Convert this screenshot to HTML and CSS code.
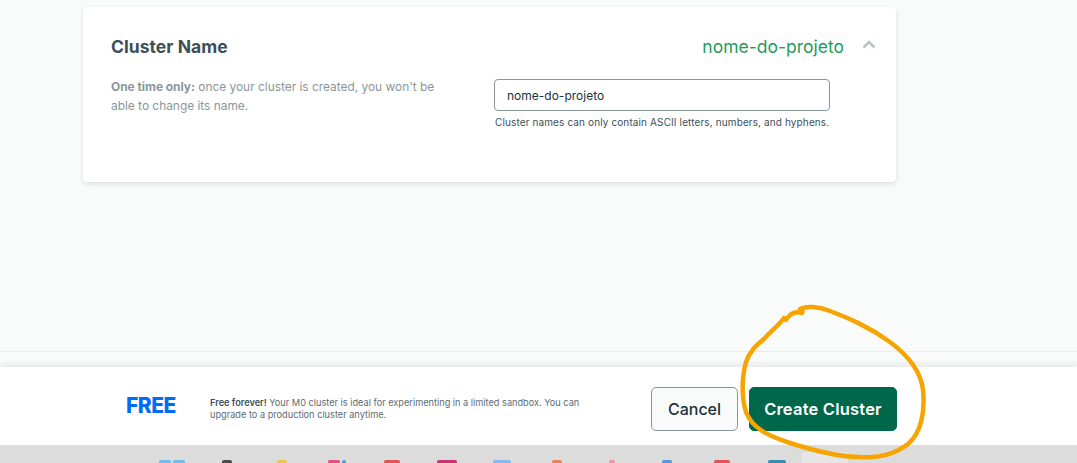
FILE: index.html
```html
<!DOCTYPE html>
<html lang="en">
<head>
<meta charset="utf-8">
<title>Create Cluster</title>
<link rel="stylesheet" href="styles.css">
</head>
<body>
<div class="page">
  <main class="main">
    <section class="card">
      <div class="card-head">
        <h2 class="card-title">Cluster Name</h2>
        <div class="card-summary">
          <span class="summary-name">nome-do-projeto</span>
          <svg class="chevron" width="14" height="9" viewBox="0 0 14 9"><path d="M1.5 7.5 L7 2 L12.5 7.5" fill="none" stroke="#b8c4c2" stroke-width="2.6" stroke-linejoin="miter"/></svg>
        </div>
      </div>
      <div class="card-body">
        <p class="desc"><strong>One time only:</strong> once your cluster is created, you won't be able to change its name.</p>
        <div class="field">
          <div class="input">nome-do-projeto</div>
          <p class="helper">Cluster names can only contain ASCII letters, numbers, and hyphens.</p>
        </div>
      </div>
    </section>
  </main>
  <footer class="footer">
    <div class="price">FREE</div>
    <p class="note"><strong>Free forever!</strong> Your M0 cluster is ideal for experimenting in a limited sandbox. You can upgrade to a production cluster anytime.</p>
    <div class="actions">
      <button class="btn btn-cancel">Cancel</button>
      <button class="btn btn-create">Create Cluster</button>
    </div>
  </footer>
  <div class="taskbar">
    <span class="tb"><i class="ic ic-blue w12"></i><i class="ic ic-blue w12"></i></span>
    <span class="tb"><i class="ic ic-dark w10"></i></span>
    <span class="tb"><i class="ic ic-yellow w10"></i></span>
    <span class="tb"><i class="ic ic-pink w12"></i><i class="ic ic-blue2 w4"></i></span>
    <span class="tb"><i class="ic ic-red w16"></i></span>
    <span class="tb"><i class="ic ic-mag w20"></i></span>
    <span class="tb"><i class="ic ic-lblue w18"></i></span>
    <span class="tb"><i class="ic ic-orange w10"></i></span>
    <span class="tb"><i class="ic ic-lpink w6"></i></span>
    <span class="tb"><i class="ic ic-blue2 w10"></i></span>
    <span class="tb"><i class="ic ic-red w16"></i></span>
    <span class="tb"><i class="ic ic-teal w18"></i></span>
    <span class="tb tb-active"></span>
  </div>
  <svg class="scribble" width="1077" height="463" viewBox="0 0 1077 463">
    <path d="M786 320 C790 313 796 311 802 313 C803 311 802 309 800 309 C806 306 818 306 830 311 C848 318 868 326 890 342 C910 357 921 372 923 390 C925 410 922 432 908 444 C894 455 876 458 860 457 C838 457 812 450 790 443 C768 436 752 428 746 412 C741 396 742 376 746 362 C750 350 758 344 765 338 C772 330 778 326 784 318"
      fill="none" stroke="#f8a400" stroke-width="4.5" stroke-linecap="round" stroke-linejoin="round"/>
  </svg>
</div>
</body>
</html>
```

FILE: styles.css
```css
* { box-sizing: border-box; }

html, body {
  margin: 0;
  padding: 0;
}

body {
  width: 1077px;
  height: 463px;
  overflow: hidden;
  background: #f9fbfa;
  font-family: Inter, "Open Sans", sans-serif;
  color: #3d4f58;
}

.page {
  position: relative;
  display: flex;
  flex-direction: column;
  height: 463px;
}

.main {
  height: 352px;
  padding: 7px 0 0 83px;
  border-bottom: 1px solid #e7eeec;
}

.card {
  width: 813px;
  height: 175px;
  background: #fff;
  border-radius: 4px;
  box-shadow: 0 2px 5px rgba(6, 22, 33, 0.12), 0 0 1px rgba(6, 22, 33, 0.1);
  padding: 27px 20px 0 28px;
}

.card-head {
  display: flex;
  justify-content: space-between;
  align-items: center;
  height: 24px;
}

.card-title {
  margin: 0;
  font-size: 17.5px;
  font-weight: 700;
  color: #3d4f58;
  letter-spacing: 0.05px;
}

.card-summary {
  display: flex;
  align-items: center;
  gap: 18px;
}

.summary-name {
  font-size: 17.5px;
  color: #1e9c5a;
  font-weight: 400;
}

.chevron { display: block; margin-top: -3px; }

.card-body {
  display: flex;
  margin-top: 21px;
}

.desc {
  width: 383px;
  margin: -2px 0 0;
  padding-right: 40px;
  font-size: 11.9px;
  line-height: 19px;
  color: #89979b;
}

.desc strong { font-weight: 700; color: #89979b; }

.field { width: 336px; }

.input {
  height: 32px;
  border: 1px solid #89979b;
  border-radius: 4px;
  padding: 0 12px;
  display: flex;
  align-items: center;
  font-size: 12px;
  color: #21313c;
}

.helper {
  margin: 5px 0 0 1px;
  font-size: 10px;
  letter-spacing: 0.12px;
  color: #3d4f58;
  white-space: nowrap;
}

.footer {
  margin-top: 15px;
  height: 78px;
  background: #fff;
  box-shadow: 0 -3px 6px rgba(6, 22, 33, 0.08);
  display: flex;
  align-items: center;
  padding: 6px 180px 0 126px;
}

.price {
  width: 84px;
  font-size: 21px;
  font-weight: 800;
  color: #016bf8;
  letter-spacing: -0.5px;
  margin-top: -8px;
}

.note {
  width: 385px;
  margin: 0;
  font-size: 9.2px;
  line-height: 12px;
  color: #5d6c74;
}

.note strong { font-weight: 600; color: #3d4f58; }

.actions {
  margin-left: auto;
  display: flex;
  gap: 11px;
}

.btn {
  height: 44px;
  border-radius: 5px;
  font-family: inherit;
  padding: 0;
  cursor: pointer;
}

.btn-cancel {
  width: 87px;
  background: #f9fbfa;
  border: 1px solid #89979b;
  color: #21313c;
  font-size: 16px;
  font-weight: 500;
}

.btn-create {
  width: 148px;
  background: #00684a;
  border: 1px solid #00684a;
  color: #fff;
  font-size: 16.5px;
  letter-spacing: 0.2px;
  font-weight: 600;
}

.taskbar {
  flex: 1;
  background: #dcdcdc;
  display: flex;
  align-items: flex-end;
  padding-left: 144px;
}

.tb {
  width: 55px;
  height: 4px;
  display: flex;
  justify-content: center;
  align-items: flex-end;
  gap: 2px;
}

.tb-active {
  width: 46px;
  height: 11px;
  margin-left: -2px;
  background: #e6e6e6;
  border-radius: 3px 3px 0 0;
}

.ic { display: block; height: 3px; border-radius: 2px 2px 0 0; opacity: 0.85; }
.w4 { width: 4px; }
.w6 { width: 6px; }
.w10 { width: 10px; }
.w12 { width: 12px; }
.w16 { width: 16px; }
.w18 { width: 18px; }
.w20 { width: 20px; }
.ic-blue { background: #5ab6ee; }
.ic-blue2 { background: #3a8ee0; }
.ic-lblue { background: #7ab3ef; }
.ic-dark { background: #333; }
.ic-yellow { background: #f1c232; }
.ic-pink { background: #e8376b; }
.ic-lpink { background: #f08aa0; }
.ic-red { background: #e43c3c; }
.ic-mag { background: #c2185b; }
.ic-orange { background: #f07040; }
.ic-teal { background: #1f7fa8; }

.scribble {
  position: absolute;
  left: 0;
  top: 0;
  pointer-events: none;
}
```
